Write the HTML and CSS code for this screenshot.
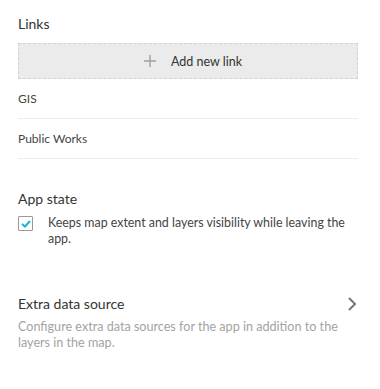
FILE: index.html
```html
<!DOCTYPE html>
<html lang="en">

<head>
    <meta charset="UTF-8">
    <meta name="viewport" content="width=device-width, initial-scale=1.0">
    <title>App settings</title>
    <link rel="stylesheet" href="styles.css">
</head>

<body>

    <div class="panel">
        <div class="section links">
            <div class="title">Links</div>
            <button class="add-link" type="button">
                <svg class="plus" width="12" height="12" viewBox="0 0 12 12">
                    <path d="M6 0 V12 M0 6 H12" fill="none" stroke="#a0a0a0" stroke-width="1.4" />
                </svg>
                <span>Add new link</span>
            </button>
            <ul class="link-list">
                <li>GIS</li>
                <li>Public Works</li>
            </ul>
        </div>

        <div class="section app-state">
            <div class="title">App state</div>
            <label class="check">
                <span class="box">
                    <svg width="10" height="8" viewBox="0 0 10 8">
                        <path d="M1 4 L4 6.5 L9 1" fill="none" stroke="#18b4d6" stroke-width="2" />
                    </svg>
                </span>
                <span class="check-text">Keeps map extent and layers visibility while leaving the app.</span>
            </label>
        </div>

        <div class="section extra">
            <div class="extra-head">
                <div class="title">Extra data source</div>
                <svg class="chevron" width="10" height="14" viewBox="0 0 10 14">
                    <path d="M2 1 L8 7 L2 13" fill="none" stroke="#777" stroke-width="2" />
                </svg>
            </div>
            <p class="desc">Configure extra data sources for the app in addition to the layers in the map.</p>
        </div>
    </div>

</body>

</html>
```

FILE: styles.css
```css
body {
    font-family: Lato, "Open Sans", sans-serif;
    background-color: white;
    margin: 0;
    padding: 0;
    color: #333;
}

.panel {
    padding: 15px 22px 0 18px;
}

.title {
    font-size: 14px;
    line-height: 18px;
    color: #333;
}

.add-link {
    width: 100%;
    height: 36px;
    margin-top: 10px;
    background-color: #ebebeb;
    border: 1px dashed #d2d2d2;
    display: flex;
    align-items: center;
    justify-content: center;
    gap: 15px;
    font-family: inherit;
    font-size: 12.5px;
    color: #333;
    padding: 0 0 0 10px;
}

.link-list {
    list-style: none;
    margin: 0;
    padding: 0;
}

.link-list li {
    height: 39px;
    line-height: 39px;
    font-size: 12px;
    color: #444;
    border-bottom: 1px solid #eeeeee;
}

.app-state {
    margin-top: 31px;
}

.check {
    display: flex;
    gap: 15px;
    margin-top: 7px;
}

.box {
    flex: none;
    width: 13px;
    height: 13px;
    border: 1px solid #999;
    border-radius: 1px;
    display: flex;
    align-items: center;
    justify-content: center;
    margin-top: 1px;
}

.check-text {
    font-size: 12.4px;
    line-height: 16px;
    color: #444;
}

.extra {
    margin-top: 48px;
}

.extra-head {
    display: flex;
    justify-content: space-between;
    align-items: center;
}

.chevron {
    margin-right: 1px;
}

.desc {
    margin: 6px 0 0;
    font-size: 12.6px;
    line-height: 16px;
    color: #a3a3a3;
}
```
